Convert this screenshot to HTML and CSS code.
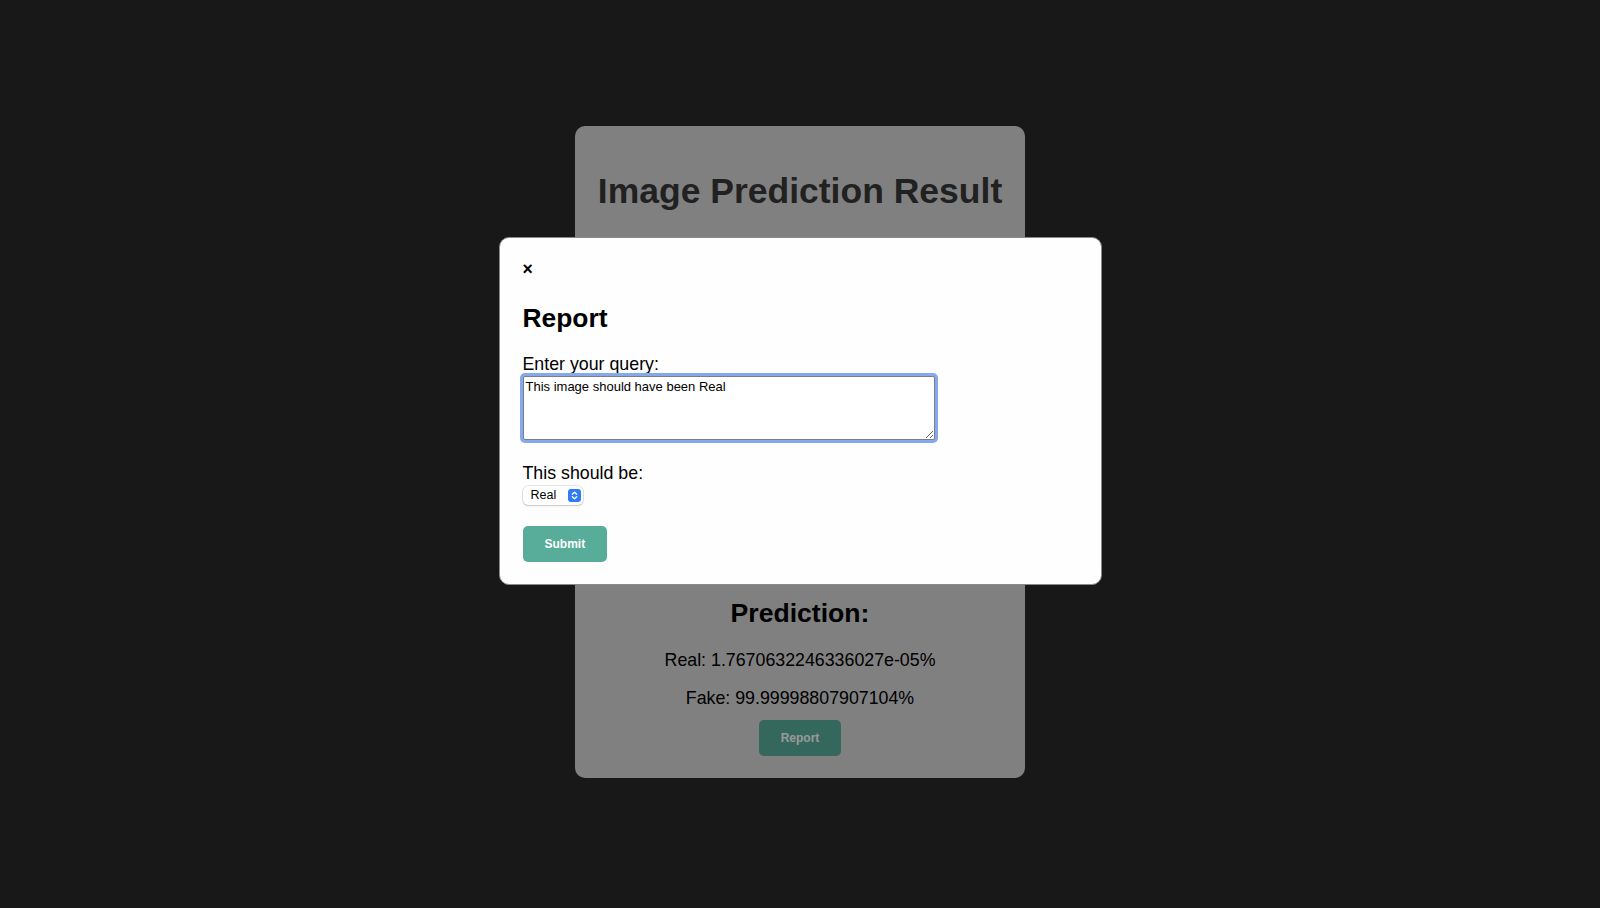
FILE: index.html
```html
<!DOCTYPE html>
<html lang="en">
<head>
<meta charset="utf-8">
<title>Image Prediction Result</title>
<link rel="stylesheet" href="styles.css">
</head>
<body>
  <main class="card">
    <h1 class="card-title">Image Prediction Result</h1>
    <div class="preview"></div>
    <h2 class="section-title">Prediction:</h2>
    <p class="score">Real: 1.7670632246336027e-05%</p>
    <p class="score score-last">Fake: 99.99998807907104%</p>
    <button class="btn" type="button">Report</button>
  </main>

  <div class="overlay">
    <div class="modal">
      <span class="close">&times;</span>
      <h2 class="modal-title">Report</h2>
      <form class="report-form">
        <label class="field-label" for="query">Enter your query:</label>
        <textarea id="query" class="query">This image should have been Real</textarea>
        <label class="field-label field-label-gap" for="kind">This should be:</label>
        <span class="select-wrap">
          <select id="kind" class="select">
            <option>Real</option>
            <option>Fake</option>
          </select>
          <svg class="stepper" width="13" height="13" viewBox="0 0 13 13" aria-hidden="true">
            <rect width="13" height="13" rx="3" fill="#2f7cf6"/>
            <path d="M4.3 5.2 L6.5 3.2 L8.7 5.2" fill="none" stroke="#fff" stroke-width="1.3" stroke-linecap="round" stroke-linejoin="round"/>
            <path d="M4.3 7.8 L6.5 9.8 L8.7 7.8" fill="none" stroke="#fff" stroke-width="1.3" stroke-linecap="round" stroke-linejoin="round"/>
          </svg>
        </span>
        <button class="btn btn-submit" type="button">Submit</button>
      </form>
    </div>
  </div>
</body>
</html>
```
FILE: styles.css
```css
* {
  box-sizing: border-box;
}

html, body {
  margin: 0;
  padding: 0;
}

body {
  background: #282828;
  font-family: "Liberation Sans", Arial, Helvetica, sans-serif;
  height: 908px;
  overflow: hidden;
}

.card {
  width: 450px;
  margin: 126px auto 0;
  padding: 22px;
  background: #d5d5d5;
  border-radius: 10px;
  text-align: center;
}

.card-title {
  margin: 23px 0;
  font-size: 35.5px;
  line-height: 40px;
  font-weight: bold;
  color: #383838;
}

.preview {
  height: 342px;
}

.section-title {
  margin: 22px 0;
  font-size: 26.6px;
  line-height: 30px;
  font-weight: bold;
  color: #000;
}

.score {
  margin: 17.6px 0;
  font-size: 17.8px;
  line-height: 20px;
  color: #000;
}

.score-last {
  margin-bottom: 12.4px;
}

.btn {
  display: inline-block;
  height: 36px;
  padding: 0 22px;
  border: none;
  border-radius: 5px;
  background: #57ad99;
  color: #fff;
  font-family: "Liberation Sans", Arial, sans-serif;
  font-size: 12px;
  font-weight: bold;
  cursor: pointer;
}

.overlay {
  position: fixed;
  inset: 0;
  background: rgba(0, 0, 0, 0.4);
}

.modal {
  width: 603px;
  margin: 237px auto 0;
  padding: 21px 22px 22px 23px;
  background: #fefefe;
  border: 1px solid #8a8a8a;
  border-radius: 10px;
}

.close {
  display: block;
  font-size: 17.6px;
  line-height: 20px;
  font-weight: bold;
  color: #000;
}

.modal-title {
  margin: 24px 0 21px;
  font-size: 26.4px;
  line-height: 30px;
  font-weight: bold;
  color: #000;
}

.report-form {
  display: flex;
  flex-direction: column;
  align-items: flex-start;
}

.field-label {
  font-size: 17.8px;
  line-height: 20px;
  color: #000;
}

.field-label-gap {
  margin-top: 23px;
}

.query {
  display: block;
  width: 412px;
  height: 64px;
  margin: 2px 0 0;
  padding: 2px;
  border: 1px solid #7d7d7d;
  border-radius: 2px;
  font-family: "Liberation Sans", Arial, sans-serif;
  font-size: 13px;
  line-height: 15px;
  color: #000;
  caret-color: #3b7cf0;
  box-shadow: 0 0 0 3px #84a9ef;
  outline: none;
  resize: both;
}

.select-wrap {
  position: relative;
  display: block;
  margin: 3px 0 0;
  width: 60px;
  height: 19px;
}

.select {
  appearance: none;
  -webkit-appearance: none;
  display: block;
  width: 60px;
  height: 19px;
  margin: 0;
  padding: 0 0 0 8px;
  border: none;
  border-radius: 5px;
  background: #fff;
  box-shadow: 0 0 0 0.5px rgba(0, 0, 0, 0.18), 0 1px 2px rgba(0, 0, 0, 0.14);
  font-family: "Liberation Sans", Arial, sans-serif;
  font-size: 12.5px;
  line-height: 19px;
  color: #000;
}

.stepper {
  position: absolute;
  top: 3px;
  left: 45px;
}

.btn-submit {
  margin-top: 21px;
}
```
